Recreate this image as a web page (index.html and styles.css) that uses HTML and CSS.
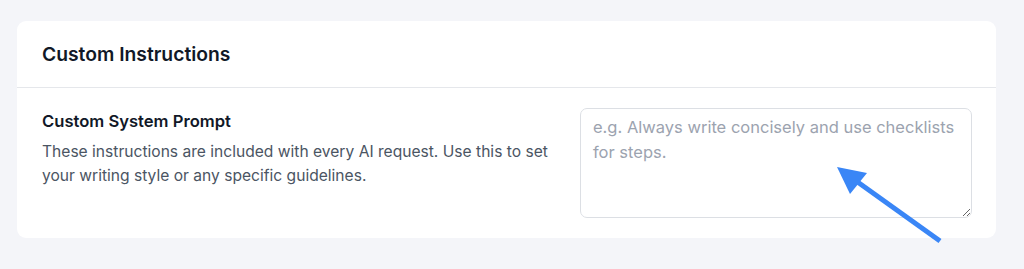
FILE: index.html
```html
<!DOCTYPE html>
<html>
<head>
<meta charset="utf-8">
<link rel="stylesheet" href="styles.css">
</head>
<body>
<div class="page">
  <section class="card">
    <header class="card-header">
      <h2 class="card-title">Custom Instructions</h2>
    </header>
    <div class="row">
      <div class="info">
        <h3 class="label">Custom System Prompt</h3>
        <p class="desc">These instructions are included with every AI request. Use this to set your writing style or any specific guidelines.</p>
      </div>
      <textarea class="input" placeholder="e.g. Always write concisely and use checklists for steps."></textarea>
    </div>
  </section>
  <svg class="arrow" width="1024" height="269" viewBox="0 0 1024 269">
    <line x1="940" y1="241" x2="852" y2="178" stroke="#3a86f6" stroke-width="5" stroke-linecap="butt"/>
    <polygon points="837,167 867,173 850,194" fill="#3a86f6"/>
  </svg>
</div>
</body>
</html>
```
FILE: styles.css
```css
html, body {
  margin: 0;
  padding: 0;
  background: #f4f5f9;
}
body {
  font-family: Inter, "Noto Sans", "Liberation Sans", sans-serif;
  color: #111827;
}
.page {
  position: relative;
  width: 1024px;
  height: 269px;
  padding: 21px 28px 0 17px;
  box-sizing: border-box;
}
.card {
  background: #ffffff;
  border-radius: 9px;
  overflow: hidden;
}
.card-header {
  height: 67px;
  box-sizing: border-box;
  padding: 0 25px;
  display: flex;
  align-items: center;
  border-bottom: 1px solid #e5e7eb;
}
.card-title {
  margin: 0;
  font-size: 19.3px;
  font-weight: 600;
  color: #111827;
}
.row {
  display: flex;
  padding: 20px 24px 20px 25px;
  gap: 12px;
}
.info {
  flex: 1;
  min-width: 0;
}
.label {
  margin: 0;
  font-size: 16.6px;
  font-weight: 600;
  line-height: 26px;
  color: #111827;
}
.desc {
  margin: 6px 0 0;
  font-size: 15.6px;
  line-height: 24px;
  color: #4b5563;
}
.input {
  flex-shrink: 0;
  width: 392px;
  height: 110px;
  box-sizing: border-box;
  border: 1px solid #dcdfe4;
  border-radius: 7px;
  padding: 6px 12px;
  font-family: Inter, "Noto Sans", "Liberation Sans", sans-serif;
  font-size: 16.5px;
  line-height: 25px;
  color: #111827;
  resize: vertical;
  outline: none;
  background: #fff;
}
.input::placeholder {
  color: #9ca3af;
}
.arrow {
  position: absolute;
  left: 0;
  top: 0;
  pointer-events: none;
}
```
